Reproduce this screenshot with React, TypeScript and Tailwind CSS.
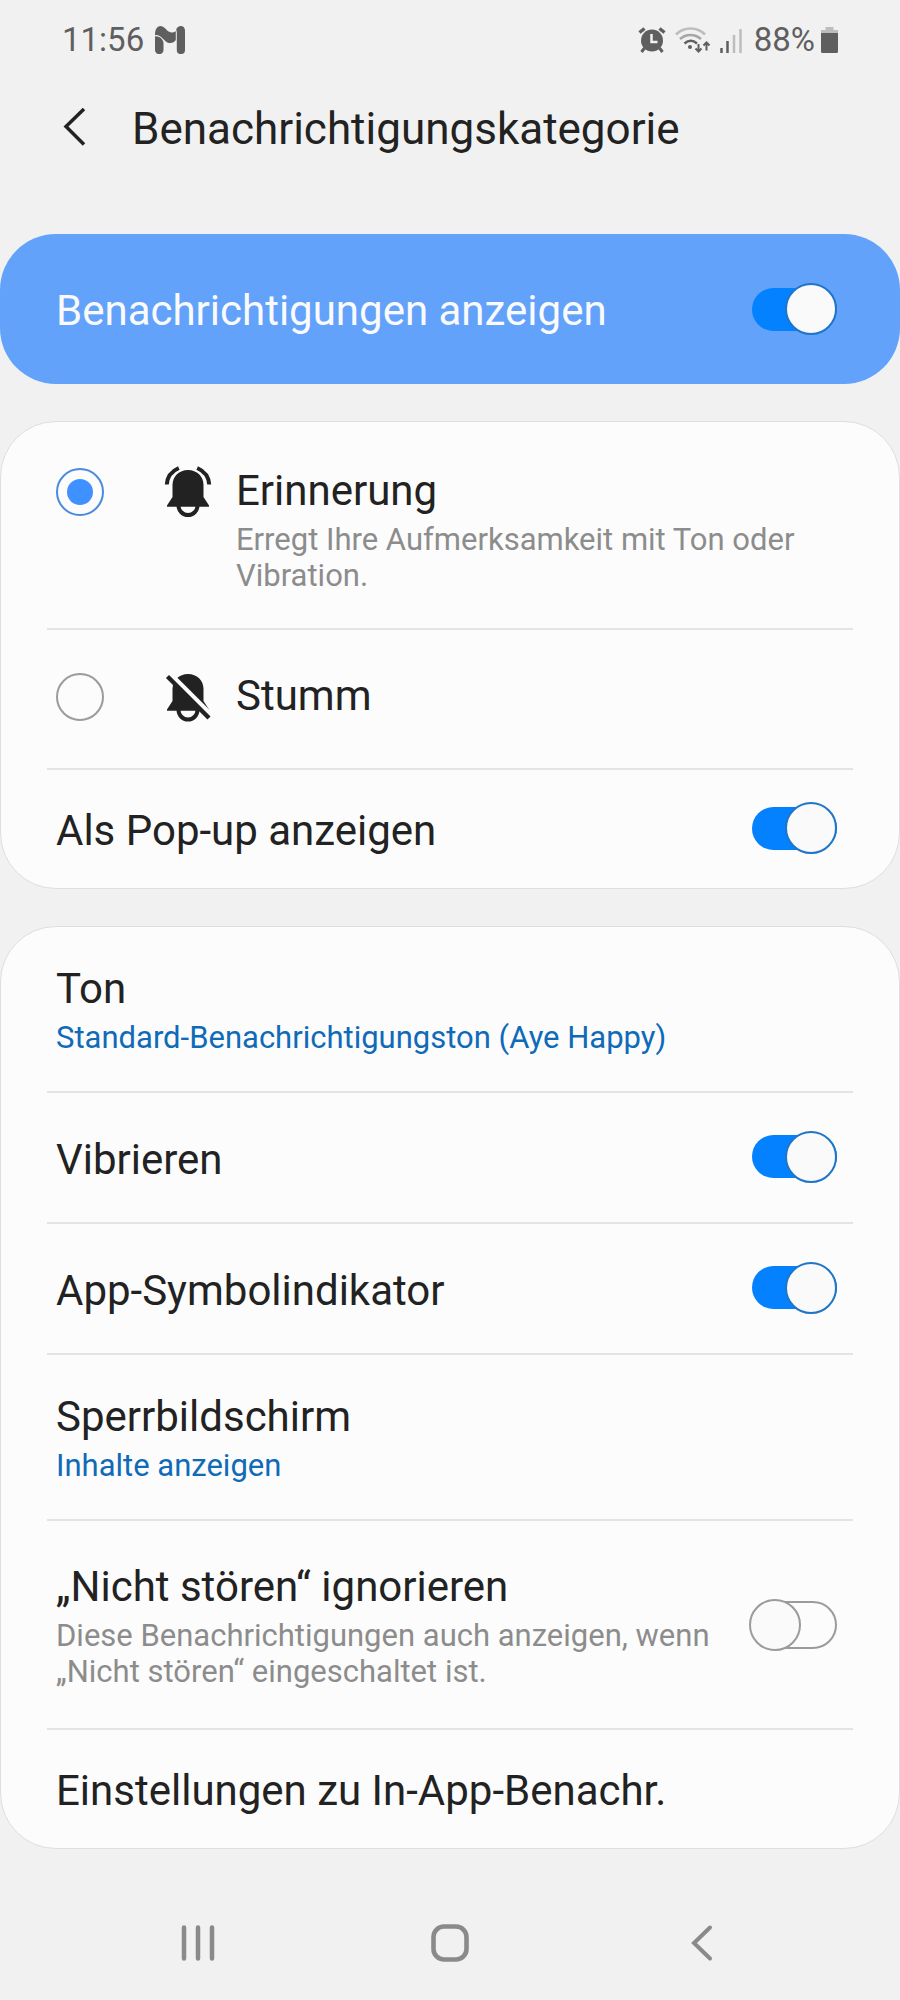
import { useState } from "react";
import type { ReactNode } from "react";

export default function App() {
  return (
    <div className="flex min-h-screen flex-col bg-[#f1f1f1] font-['Roboto',sans-serif] text-[#222222]">
      <StatusBar />
      <Header />
      <Settings />
      <NavBar />
    </div>
  );
}

function StatusBar() {
  return (
    <div className="flex h-20 items-center justify-between pr-[61px] pl-[62px] text-[33px] text-[#5f5f5f]">
      <div className="flex items-center gap-[11px]">
        <span>11:56</span>
        <svg className="h-7 w-[30px]" viewBox="0 0 30 28" fill="currentColor">
          <path d="M0 10.2C4.500 9.800 8.500 13 8.500 17.500V24a4.250 4.250 0 0 1-8.500 0z" />
          <path d="M21.200 3.500C22 1.200 23.800 0 25.800 0 28.300 0 30 2 30 4.500V24a4.100 4.100 0 0 1-8.200 0V6z" />
          <path d="M0 9.200C0 3.500 2 0 5.500 0 8.500 0 10 2.300 12 4.300c2.500 2.300 5 3 8.800.9V14c-1.800 2.800-6.500 4.500-10.300 1.200C7 12 4.500 8.500 0 9.200z" />
        </svg>
      </div>
      <div className="flex items-center gap-2">
        <svg className="mr-px h-[26px] w-7" viewBox="0 0 28 26" fill="none">
          <circle cx="14" cy="13.500" r="11" fill="currentColor" />
          <path d="M1.500 5.500 6.500 1.500M26.500 5.500 21.500 1.500" stroke="currentColor" strokeWidth="3.500" />
          <path d="M6.500 21 3.500 25M21.500 21l3 4" stroke="currentColor" strokeWidth="3" />
          <path d="M13.500 7v8h6" stroke="#f1f1f1" strokeWidth="2.500" />
        </svg>
        <svg className="h-[26px] w-9" viewBox="0 0 36 26" fill="none" strokeWidth="2.500">
          <path d="M1 7.500C9 -.5 22 -.5 30 7.500" stroke="#bdbdbd" />
          <path d="M5 12c6-5.500 15-5.500 21 0" stroke="#a6a6a6" />
          <path d="M9.500 16.500c4-3.500 8.500-3.500 12.500 0" stroke="currentColor" />
          <circle cx="15" cy="20" r="2" fill="currentColor" />
          <path d="M23.500 17v8M20.500 21.500l3 3 3-3M31.500 23.500v-8M28.500 18.500l3-3 3 3" stroke="currentColor" strokeWidth="2" />
        </svg>
        <svg className="mr-[3px] h-[25px] w-6" viewBox="0 0 24 25" strokeWidth="2.500">
          <path d="M2.500 20v5M8.500 13v12" stroke="currentColor" />
          <path d="M15 7v18M21.500 1v24" stroke="#bdbdbd" />
        </svg>
        <div className="flex items-center gap-[5px]">
          <span>88%</span>
          <svg className="h-[27px] w-[19px]" viewBox="0 0 19 27">
            <path d="M5.500 0h8v3H18v4H1V3h4.500z" fill="#bdbdbd" />
            <path d="M1 6h17v18.500q0 1.500-1.500 1.500h-14Q1 26 1 24.500z" fill="currentColor" />
          </svg>
        </div>
      </div>
    </div>
  );
}

function Header() {
  return (
    <header className="flex h-[154px] items-start pt-6 pl-[62px]">
      <button aria-label="Zurück" className="mt-1 flex h-10 w-[70px]">
        <svg className="h-10 w-6" viewBox="0 0 24 40" fill="none">
          <path d="M22 1 4 18.500 22 36.500" stroke="#222222" strokeWidth="3.500" />
        </svg>
      </button>
      <h1 className="text-[44px] leading-[50px]">Benachrichtigungskategorie</h1>
    </header>
  );
}

function Settings() {
  const [mode, setMode] = useState("erinnerung");
  return (
    <main className="flex flex-col gap-[37px]">
      <label className="flex h-[150px] items-center justify-between rounded-[56px] bg-[#62a2fb] pr-[63px] pl-14 text-[42px] leading-[50px] text-[#fafafa]">
        <span className="pt-1">Benachrichtigungen anzeigen</span>
        <Toggle on />
      </label>

      <Card>
        <Choice
          title="Erinnerung"
          text="Erregt Ihre Aufmerksamkeit mit Ton oder Vibration."
          icon={<BellRinging />}
          checked={mode === "erinnerung"}
          onSelect={() => setMode("erinnerung")}
        />
        <Choice
          title="Stumm"
          icon={<BellOff />}
          checked={mode === "stumm"}
          onSelect={() => setMode("stumm")}
        />
        <SwitchRow title="Als Pop-up anzeigen" on />
      </Card>

      <Card>
        <LinkRow title="Ton" value="Standard-Benachrichtigungston (Aye Happy)" />
        <SwitchRow title="Vibrieren" on />
        <SwitchRow title="App-Symbolindikator" on />
        <LinkRow title="Sperrbildschirm" value="Inhalte anzeigen" />
        <SwitchRow
          title="„Nicht stören“ ignorieren"
          text="Diese Benachrichtigungen auch anzeigen, wenn „Nicht stören“ eingeschaltet ist."
        />
        <LinkRow title="Einstellungen zu In-App-Benachr." />
      </Card>
    </main>
  );
}

function Card({ children }: { children: ReactNode }) {
  return (
    <section className="divide-y-2 divide-[#e4e4e4] rounded-[56px] border border-[#dedede] bg-[#fcfcfc] px-[46px]">
      {children}
    </section>
  );
}

function Choice({
  title,
  text,
  icon,
  checked,
  onSelect,
}: {
  title: string;
  text?: string;
  icon: ReactNode;
  checked: boolean;
  onSelect: () => void;
}) {
  return (
    <label className={text ? "flex items-start px-[9px] pt-11 pb-[34px]" : "flex items-start px-[9px] pt-[41px] pb-[45px]"}>
      <input
        type="radio"
        name="mode"
        checked={checked}
        onChange={onSelect}
        className="mt-0.5 size-12 shrink-0 appearance-none rounded-full border-2 border-[#9b9b9b] p-[9px] checked:border-[#4a8be0] checked:bg-[#3f91ff] checked:bg-clip-content"
      />
      <span className="ml-[60px] w-[72px] shrink-0">{icon}</span>
      <span className="flex min-w-0 flex-col gap-1.5">
        <span className="text-[42px] leading-[50px]">{title}</span>
        {text && <span className="text-[31px] leading-9 text-[#8c8c8c]">{text}</span>}
      </span>
    </label>
  );
}

function SwitchRow({ title, text, on = false }: { title: string; text?: string; on?: boolean }) {
  return (
    <label
      className={
        text
          ? "flex items-center px-[9px] pt-[41px] pb-[38px]"
          : "flex h-[131px] items-center px-[9px] last:h-[118px]"
      }
    >
      <span className="flex min-w-0 flex-1 flex-col gap-1.5">
        <span className={text ? "text-[42px] leading-[50px]" : "pt-1 text-[42px] leading-[50px]"}>{title}</span>
        {text && <span className="text-[31px] leading-9 text-[#8c8c8c]">{text}</span>}
      </span>
      <span className="ml-8 pr-[7px] pb-0.5">
        <Toggle on={on} />
      </span>
    </label>
  );
}

function LinkRow({ title, value }: { title: string; value?: string }) {
  return (
    <a
      href="#"
      className={
        value ? "flex flex-col gap-1.5 px-[9px] pt-[37px] pb-[35px]" : "flex h-[118px] items-center px-[9px] pt-1"
      }
    >
      <span className="text-[42px] leading-[50px]">{title}</span>
      {value && <span className="text-[31px] leading-9 text-[#0f6ab8]">{value}</span>}
    </a>
  );
}

function Toggle({ on = false }: { on?: boolean }) {
  return (
    <span className="relative flex h-[52px] w-[88px] shrink-0 items-center justify-end">
      <input
        type="checkbox"
        role="switch"
        defaultChecked={on}
        className="peer h-12 w-[84px] appearance-none rounded-full border-2 border-[#9b9b9b] checked:h-[43px] checked:w-[85px] checked:border-0 checked:bg-[#0381fe]"
      />
      <span className="absolute top-0 left-0 size-[52px] rounded-full border-2 border-[#9b9b9b] bg-[#fafafa] peer-checked:right-0 peer-checked:left-auto peer-checked:border-[#1f76c8]" />
    </span>
  );
}

function BellRinging() {
  return (
    <svg className="h-[52px] w-12" viewBox="0 0 48 52" fill="none">
      <path d="M24 4c9 0 15.500 6.500 15.500 15v12L45 39.500v1.200H3v-1.200L8.500 31V19C8.500 10.500 15 4 24 4z" fill="#222222" />
      <path d="M14.500 39.500a9.500 9.500 0 0 0 19 0" stroke="#222222" strokeWidth="4" />
      <path d="M2.800 18.500C3.200 11 8 5 14.800 2M45.200 18.500C44.800 11 40 5 33.200 2" stroke="#222222" strokeWidth="4" />
    </svg>
  );
}

function BellOff() {
  return (
    <svg className="h-[52px] w-12" viewBox="0 0 48 52" fill="none">
      <path d="M24 3c9 0 15.500 6.500 15.500 15v12L45 38.500v1.200H3v-1.200L8.500 30V18C8.500 9.500 15 3 24 3z" fill="#222222" />
      <path d="M14.500 39a9.500 9.500 0 0 0 19 0" stroke="#222222" strokeWidth="4" />
      <path d="M6 3.500 50 47.500" stroke="#fcfcfc" strokeWidth="6" />
      <path d="M3.500 5.500 45 47" stroke="#222222" strokeWidth="4.500" />
    </svg>
  );
}

function NavBar() {
  return (
    <nav className="mt-auto grid h-[151px] grid-cols-3 items-start px-[72px] pt-[74px] text-[#8a8a8a]">
      <button aria-label="Letzte Apps" className="justify-self-center">
        <svg className="size-10" viewBox="0 0 40 40" fill="none" stroke="currentColor" strokeWidth="4.500" strokeLinecap="round">
          <path d="M6 4.500v31M20 4.500v31M34 4.500v31" />
        </svg>
      </button>
      <button aria-label="Startseite" className="justify-self-center">
        <svg className="size-10" viewBox="0 0 40 40" fill="none">
          <rect x="3.500" y="3.500" width="33" height="33" rx="10.500" stroke="currentColor" strokeWidth="4.600" />
        </svg>
      </button>
      <button aria-label="Zurück" className="justify-self-center">
        <svg className="size-10" viewBox="0 0 40 40" fill="none" stroke="currentColor" strokeWidth="4" strokeLinecap="round">
          <path d="M28 4.500 12 20l16 15.500" />
        </svg>
      </button>
    </nav>
  );
}
